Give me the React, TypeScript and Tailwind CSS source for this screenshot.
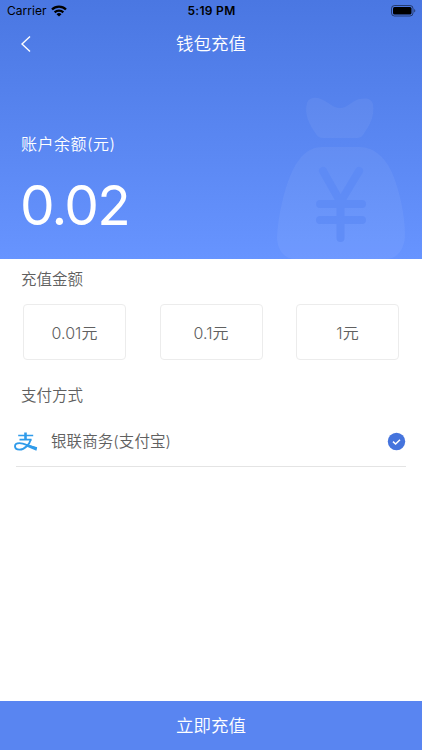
import React from "react";

const FONT = "font-['Inter','Noto_Sans_CJK_SC',sans-serif]";

function StatusBar() {
  return (
    <div className="grid h-[22px] grid-cols-3 items-center pl-[7px] pr-[6px] text-black">
      <div className="flex items-center gap-[4px]">
        <span className="text-[12px] leading-[22px] tracking-[0.05px]">Carrier</span>
        <svg width="16" height="12" viewBox="0 0 16 12" fill="none" stroke="currentColor" strokeWidth="2.300">
          <path d="M1 4.500a9.800 9.800 0 0 1 14 0" />
          <path d="M3.700 7.400a6 6 0 0 1 8.600 0" />
          <path d="M8 11.600 5.500 9.300a3.500 3.500 0 0 1 5 0z" fill="currentColor" stroke="none" />
        </svg>
      </div>
      <span className="text-center text-[12px] font-semibold leading-[22px] tracking-[0.3px]">5:19 PM</span>
      <svg className="justify-self-end" width="25" height="12" viewBox="0 0 25 12">
        <rect x="0.5" y="0.5" width="21.5" height="10.5" rx="3" fill="none" stroke="#000" strokeOpacity="0.5" />
        <rect x="2" y="2" width="18.5" height="7.5" rx="1.5" fill="#000" />
        <path d="M23.2 4v3.6c1.5-.6 1.5-3 0-3.6z" fill="#000" fillOpacity="0.5" />
      </svg>
    </div>
  );
}

function MoneyBag() {
  return (
    <svg className="absolute bottom-0 left-[276px]" width="130" height="163" viewBox="276 96 130 163">
      <g fill="#fff" fillOpacity="0.055">
        <path d="M307 103C309 97 316 97 321 99C327 101 333 108 340 108C347 108 352 101 359 99C366 98 371 98 373 104C375 117 369 126 363 135Q361 138 357 138H323Q318 138 316 134C309 124 304 114 307 103Z" />
        <path d="M322 147H360C374 147 386 158 393 175C399 190 405 214 405 235C405 246 399 259 386 259H295C283 259 277 248 277 237C278 216 284 190 291 174C298 158 308 147 322 147Z" />
      </g>
      <path
        d="M323 171 340.500 202 359 171M340.500 202V238M320 204H362M320 220H362"
        stroke="#5b89f5"
        strokeOpacity="0.7"
        strokeWidth="8"
        strokeLinecap="round"
        strokeLinejoin="round"
        fill="none"
      />
    </svg>
  );
}

function AmountCard({ label }: { label: string }) {
  return (
    <button className="flex h-[56px] w-[103px] items-center justify-center rounded-[4px] border border-[#ececec] pt-px text-[16px] font-[350] text-[#606060]">
      {label}
    </button>
  );
}

function AlipayIcon() {
  return (
    <svg width="24" height="20" viewBox="0 0 24 20" fill="none" stroke="#2f9bea">
      <path d="M11.500 .5V7.500" strokeWidth="2.600" />
      <path d="M4.200 3.500H19.200M5.500 7.600H17.500" strokeWidth="1.600" />
      <path d="M16.800 7.400C15.500 12 11 17.600 5.500 17.600C2.500 17.600 1 16.200 1 14.300C1 12.300 3 11.100 5.500 11.100C10 11.100 14.500 14.200 22.500 16.300" strokeWidth="1.900" />
      <path d="M14 12.500 23.200 15.200 22.400 18.700 12.400 14.400Z" fill="#2f9bea" stroke="none" />
    </svg>
  );
}

export default function App() {
  return (
    <div className={`flex h-[750px] w-[422px] flex-col overflow-hidden bg-white ${FONT}`}>
      <header className="relative h-[259px] shrink-0 bg-linear-to-b from-[#4a77e2] to-[#6794ff]">
        <MoneyBag />
        <StatusBar />
        <div className="grid h-[43px] grid-cols-[1fr_auto_1fr] items-center px-[20px] text-white">
          <svg width="12" height="18" viewBox="0 0 12 18" fill="none" stroke="currentColor" strokeWidth="1.400">
            <path d="M10 1.500 2 9 10 16.500" />
          </svg>
          <h1 className="text-[17.500px] font-[350] leading-[43px]">钱包充值</h1>
        </div>
        <div className="px-[21px] pt-[67px] text-white">
          <p className="text-[16px] font-[350] leading-[24px] tracking-[0.500px]">账户余额(元)</p>
          <p className="-ml-px mt-[16px] text-[55px] leading-[66px] tracking-[-1.700px]">0.02</p>
        </div>
      </header>

      <main className="flex flex-1 flex-col font-[350] text-[#606060]">
        <h2 className="px-[21px] pt-[9px] text-[15.500px] leading-[24px]">充值金额</h2>
        <div className="mt-[12px] flex justify-between px-[23px]">
          <AmountCard label="0.01元" />
          <AmountCard label="0.1元" />
          <AmountCard label="1元" />
        </div>
        <h2 className="mt-[24px] px-[21px] text-[15.500px] leading-[24px]">支付方式</h2>
        <div className="ml-[14px] mr-[16px] mt-[9px] flex h-[49px] items-center">
          <AlipayIcon />
          <span className="ml-[13px] flex-1 pt-px text-[15.500px] leading-[24px] tracking-[0.080px]">银联商务(支付宝)</span>
          <svg width="19" height="19" viewBox="0 0 19 19" fill="none">
            <circle cx="9.500" cy="9.500" r="8.700" fill="#4574dd" />
            <path d="M6 9.600 8.600 12 13 7.700" stroke="#fff" strokeWidth="1.500" />
          </svg>
        </div>
        <div className="ml-[16px] mr-[16px] h-px bg-[#e4e4e4]" />
      </main>

      <button className="h-[49px] shrink-0 bg-[#5985f1] text-[17.500px] font-[350] leading-[49px] text-white">立即充值</button>
    </div>
  );
}
